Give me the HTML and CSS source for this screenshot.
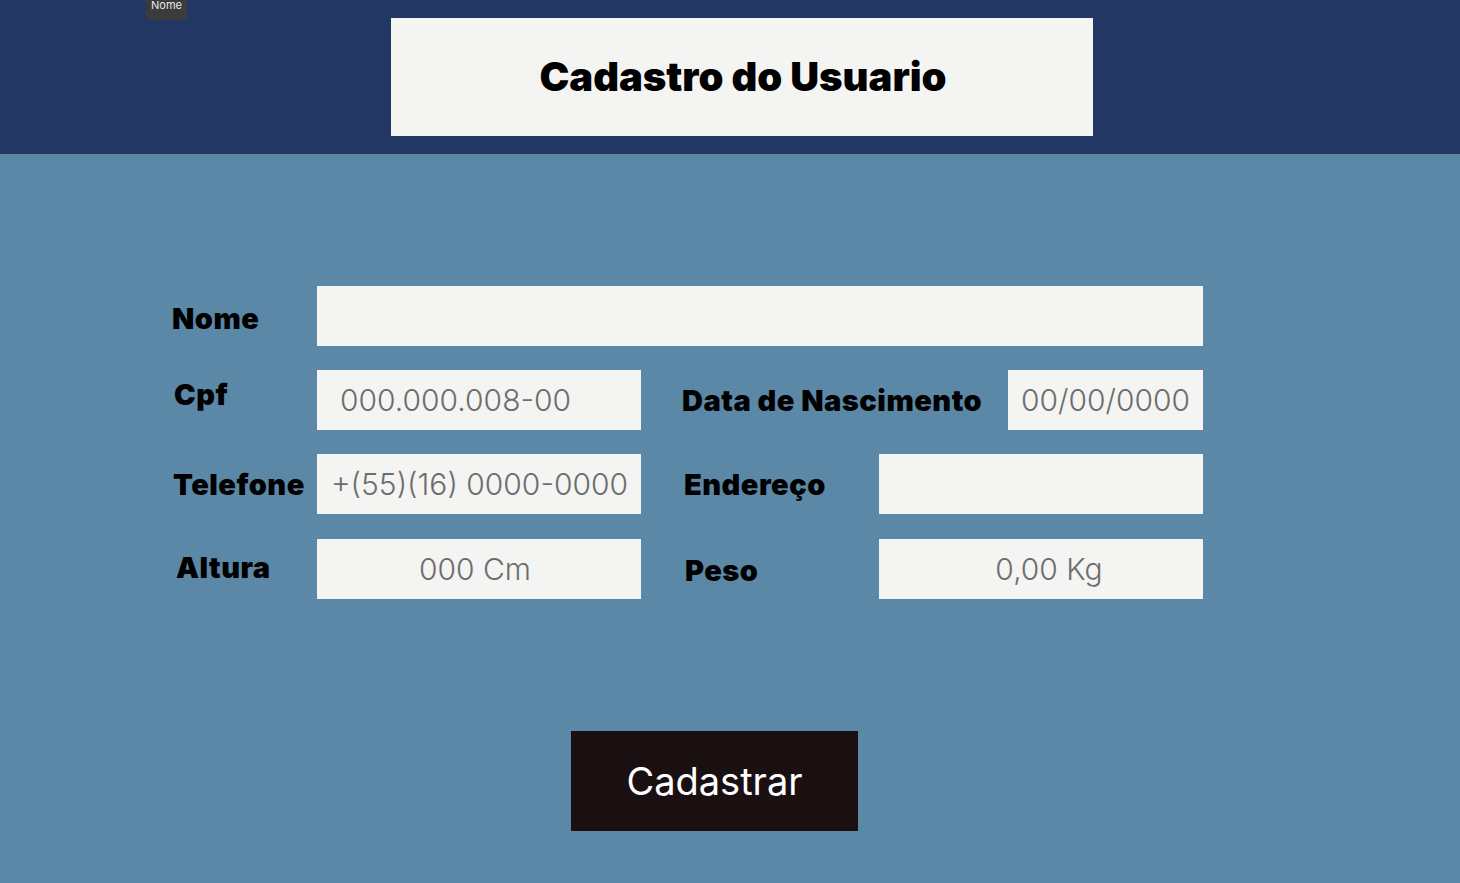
FILE: index.html
```html
<!DOCTYPE html>
<html lang="pt-BR">
<head>
<meta charset="utf-8">
<title>Cadastro do Usuario</title>
<link rel="stylesheet" href="styles.css">
</head>
<body>
<header class="topbar">
  <div class="tooltip">Nome</div>
  <div class="title-box"><h1 class="title">Cadastro do Usuario</h1></div>
</header>
<main class="content">
  <form class="form">
    <div class="row">
      <label class="label label-nome" for="nome">Nome</label>
      <input class="field field-wide" id="nome" type="text">
    </div>
    <div class="row">
      <div class="half">
        <label class="label label-cpf" for="cpf">Cpf</label>
        <input class="field field-cpf" id="cpf" type="text" placeholder="000.000.008-00">
      </div>
      <div class="half half-right">
        <label class="label label-data" for="data">Data de Nascimento</label>
        <input class="field field-data" id="data" type="text" placeholder="00/00/0000">
      </div>
    </div>
    <div class="row">
      <div class="half">
        <label class="label label-tel" for="tel">Telefone</label>
        <input class="field field-tel" id="tel" type="text" placeholder="+(55)(16) 0000-0000">
      </div>
      <div class="half half-right">
        <label class="label label-end" for="end">Endereço</label>
        <input class="field" id="end" type="text">
      </div>
    </div>
    <div class="row row-last">
      <div class="half">
        <label class="label label-alt" for="alt">Altura</label>
        <input class="field field-alt" id="alt" type="text" placeholder="000 Cm">
      </div>
      <div class="half half-right">
        <label class="label label-peso" for="peso">Peso</label>
        <input class="field field-peso" id="peso" type="text" placeholder="0,00 Kg">
      </div>
    </div>
    <div class="actions">
      <button class="btn" type="button">Cadastrar</button>
    </div>
  </form>
</main>
</body>
</html>
```
FILE: styles.css
```css
* { box-sizing: border-box; }
html, body { margin: 0; padding: 0; }
body {
  font-family: "Inter", "Noto Sans", sans-serif;
  background: #5b88a6;
  width: 1460px;
  height: 883px;
  overflow: hidden;
}
.topbar {
  position: relative;
  background: #223763;
  height: 154px;
  padding-top: 18px;
  padding-left: 391px;
}
.tooltip {
  position: absolute;
  left: 146px;
  top: -5px;
  width: 41px;
  height: 25px;
  padding-top: 4px;
  background: #3b3b3b;
  border-radius: 3px;
  color: #e8e8e8;
  font-size: 11px;
  text-align: center;
  line-height: 12px;
}
.title-box {
  width: 702px;
  height: 118px;
  background: #f4f4f2;
  display: flex;
  align-items: center;
  justify-content: center;
}
.title {
  margin: 0;
  font-size: 40px;
  font-weight: 900;
  letter-spacing: 0;
  color: #000;
  padding-left: 2px;
  padding-bottom: 1px;
}
.content {
  padding: 132px 0 0 172px;
}
.form {
  width: 1031px;
  display: flex;
  flex-direction: column;
  gap: 24px;
}
.row {
  display: flex;
  align-items: center;
  justify-content: space-between;
  height: 60px;
}
.row-last { margin-top: 1px; }
.half {
  display: flex;
  align-items: center;
  justify-content: space-between;
  width: 469px;
  height: 60px;
}
.half-right { width: 521px; }
.label {
  font-size: 29px;
  font-weight: 900;
  color: #000;
  letter-spacing: 0.5px;
}
.label-nome { padding-top: 4px; }
.label-cpf { align-self: flex-start; padding-top: 7px; padding-left: 2px; }
.label-tel { padding-left: 1px; }
.label-alt { padding-left: 4px; padding-bottom: 4px; }
.label-peso { padding-left: 3px; padding-top: 2px; }
.label-end { padding-left: 2px; }
.field {
  width: 324px;
  height: 60px;
  border: none;
  outline: none;
  background: #f4f4f2;
  font-family: "Inter", "Noto Sans", sans-serif;
  font-size: 30px;
  font-weight: 300;
  color: #6d6d6d;
  padding: 0 0 0 23px;
}
.field::placeholder { color: #6d6d6d; opacity: 1; }
.field-wide { width: 886px; }
.field-data { width: 195px; padding-left: 13px; }
.field-tel { padding-left: 14px; }
.field-alt { text-align: center; padding: 0 8px 0 0; }
.field-peso { text-align: center; padding: 0 0 0 16px; }
.actions {
  margin-top: 108px;
  padding-left: 399px;
}
.btn {
  width: 287px;
  height: 100px;
  border: none;
  background: #1a1012;
  color: #ffffff;
  font-family: "Inter", "Noto Sans", sans-serif;
  font-size: 38px;
  font-weight: 400;
  padding: 0;
}
```
